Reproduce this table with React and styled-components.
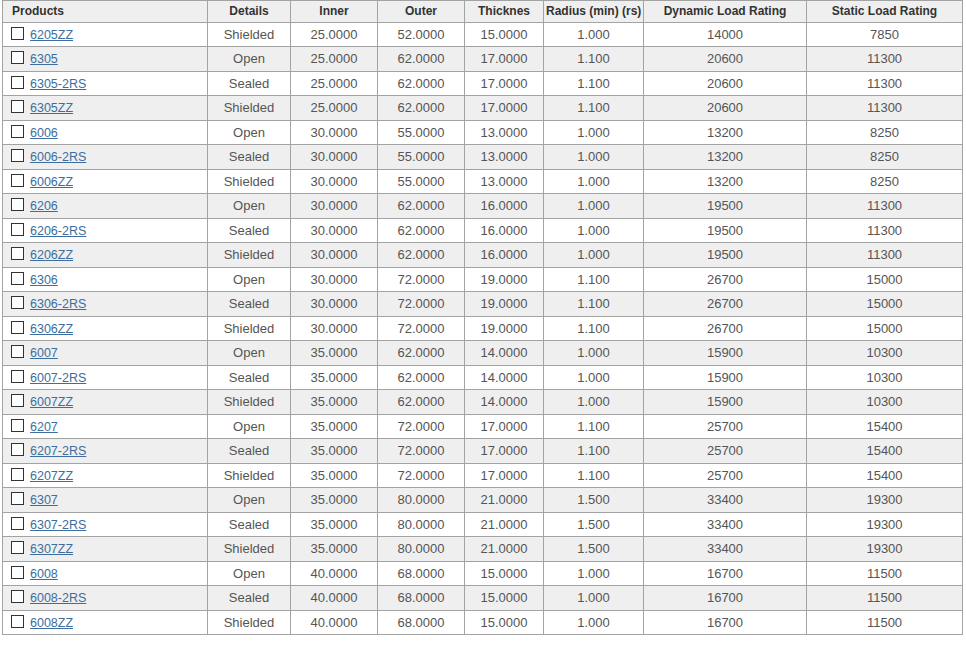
import React from "react";
import styled, { createGlobalStyle } from "styled-components";

const GlobalStyle = createGlobalStyle`
  body {
    margin: 0;
    background: #fff;
    font-family: "Liberation Sans", Arial, sans-serif;
  }
`;

const Page = styled.div`
  padding-left: 2px;
`;

const Table = styled.table`
  width: 960px;
  table-layout: fixed;
  border-collapse: collapse;
  border: 1px solid #a3a3a3;
  font-size: 13px;
`;

const HeadCell = styled.th`
  height: 20.5px;
  padding: 0 ${(p) => (p.$left ? "9px" : "2px")};
  border: 1px solid #a3a3a3;
  background: #efefef;
  color: #333;
  font-size: 12px;
  font-weight: bold;
  text-align: ${(p) => (p.$left ? "left" : "center")};
  vertical-align: middle;
  white-space: nowrap;
`;

const Row = styled.tr`
  height: 24.5px;
  background: ${(p) => (p.$alt ? "#efefef" : "#fff")};
`;

const Cell = styled.td`
  padding: 0 2px;
  border: 1px solid #a3a3a3;
  color: #555;
  text-align: center;
  vertical-align: middle;
  white-space: nowrap;
`;

const ProductCell = styled(Cell)`
  text-align: left;
  padding-left: 8px;
`;

const Check = styled.span`
  display: inline-block;
  width: 11px;
  height: 11px;
  border: 1px solid #333;
  background: #fff;
  margin-right: 6px;
  vertical-align: -1px;
`;

const ProductLink = styled.a`
  color: #3d6e9e;
  font-size: 12.5px;
  text-decoration: underline;
`;

const columns = [
  { label: "Products", width: 205, left: true },
  { label: "Details", width: 83 },
  { label: "Inner", width: 87 },
  { label: "Outer", width: 87 },
  { label: "Thicknes", width: 79 },
  { label: "Radius (min) (rs)", width: 100 },
  { label: "Dynamic Load Rating", width: 163 },
  { label: "Static Load Rating", width: 156 },
];

const rows = [
  ["6205ZZ", "Shielded", "25.0000", "52.0000", "15.0000", "1.000", "14000", "7850"],
  ["6305", "Open", "25.0000", "62.0000", "17.0000", "1.100", "20600", "11300"],
  ["6305-2RS", "Sealed", "25.0000", "62.0000", "17.0000", "1.100", "20600", "11300"],
  ["6305ZZ", "Shielded", "25.0000", "62.0000", "17.0000", "1.100", "20600", "11300"],
  ["6006", "Open", "30.0000", "55.0000", "13.0000", "1.000", "13200", "8250"],
  ["6006-2RS", "Sealed", "30.0000", "55.0000", "13.0000", "1.000", "13200", "8250"],
  ["6006ZZ", "Shielded", "30.0000", "55.0000", "13.0000", "1.000", "13200", "8250"],
  ["6206", "Open", "30.0000", "62.0000", "16.0000", "1.000", "19500", "11300"],
  ["6206-2RS", "Sealed", "30.0000", "62.0000", "16.0000", "1.000", "19500", "11300"],
  ["6206ZZ", "Shielded", "30.0000", "62.0000", "16.0000", "1.000", "19500", "11300"],
  ["6306", "Open", "30.0000", "72.0000", "19.0000", "1.100", "26700", "15000"],
  ["6306-2RS", "Sealed", "30.0000", "72.0000", "19.0000", "1.100", "26700", "15000"],
  ["6306ZZ", "Shielded", "30.0000", "72.0000", "19.0000", "1.100", "26700", "15000"],
  ["6007", "Open", "35.0000", "62.0000", "14.0000", "1.000", "15900", "10300"],
  ["6007-2RS", "Sealed", "35.0000", "62.0000", "14.0000", "1.000", "15900", "10300"],
  ["6007ZZ", "Shielded", "35.0000", "62.0000", "14.0000", "1.000", "15900", "10300"],
  ["6207", "Open", "35.0000", "72.0000", "17.0000", "1.100", "25700", "15400"],
  ["6207-2RS", "Sealed", "35.0000", "72.0000", "17.0000", "1.100", "25700", "15400"],
  ["6207ZZ", "Shielded", "35.0000", "72.0000", "17.0000", "1.100", "25700", "15400"],
  ["6307", "Open", "35.0000", "80.0000", "21.0000", "1.500", "33400", "19300"],
  ["6307-2RS", "Sealed", "35.0000", "80.0000", "21.0000", "1.500", "33400", "19300"],
  ["6307ZZ", "Shielded", "35.0000", "80.0000", "21.0000", "1.500", "33400", "19300"],
  ["6008", "Open", "40.0000", "68.0000", "15.0000", "1.000", "16700", "11500"],
  ["6008-2RS", "Sealed", "40.0000", "68.0000", "15.0000", "1.000", "16700", "11500"],
  ["6008ZZ", "Shielded", "40.0000", "68.0000", "15.0000", "1.000", "16700", "11500"],
];

const App = () => {
  return (
    <Page>
      <GlobalStyle />
      <Table>
        <colgroup>
          {columns.map((c) => (
            <col key={c.label} style={{ width: c.width }} />
          ))}
        </colgroup>
        <thead>
          <tr>
            {columns.map((c) => (
              <HeadCell key={c.label} $left={c.left}>
                {c.label}
              </HeadCell>
            ))}
          </tr>
        </thead>
        <tbody>
          {rows.map(([name, ...rest], i) => (
            <Row key={name} $alt={i % 2 === 1}>
              <ProductCell>
                <Check />
                <ProductLink href="#">{name}</ProductLink>
              </ProductCell>
              {rest.map((v, j) => (
                <Cell key={j}>{v}</Cell>
              ))}
            </Row>
          ))}
        </tbody>
      </Table>
    </Page>
  );
};

export default App;
